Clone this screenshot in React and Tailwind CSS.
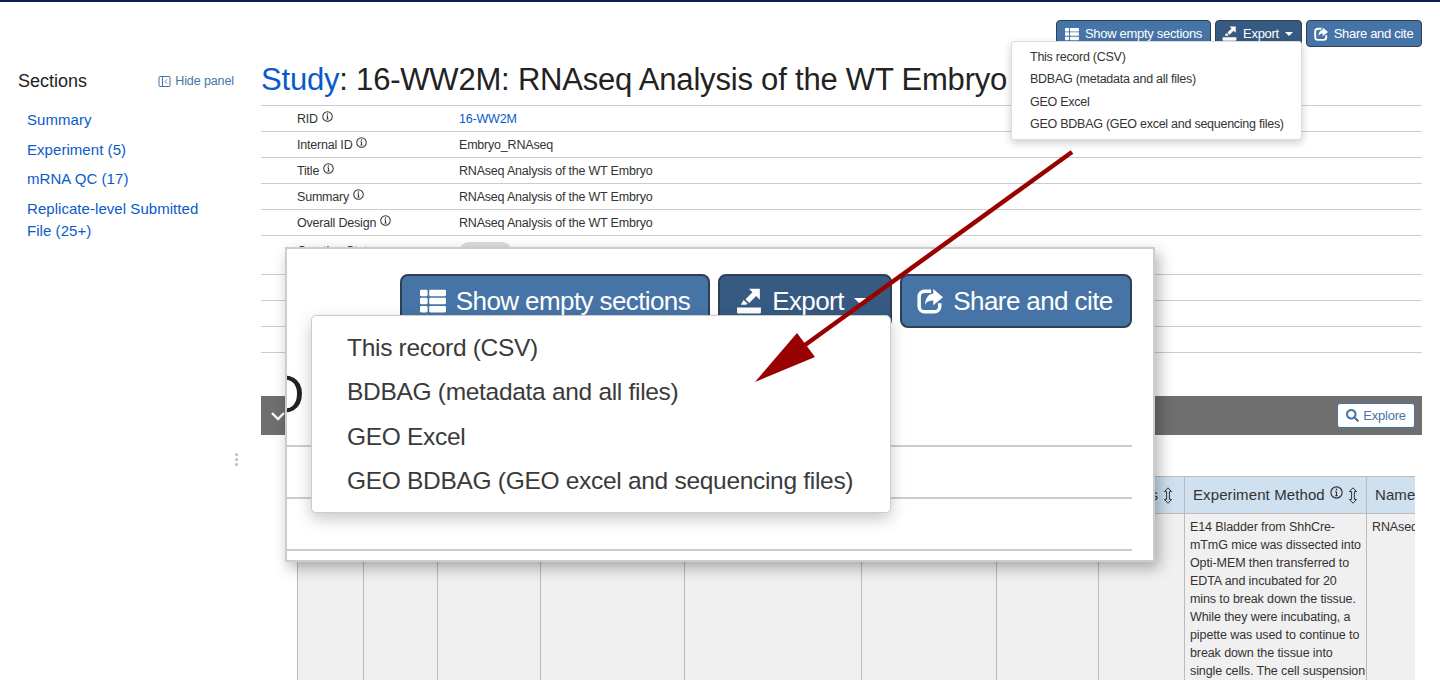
import { FaThList, FaSearch } from 'react-icons/fa';

const rows = [
  { label: 'RID', value: '16-WW2M', link: true },
  { label: 'Internal ID', value: 'Embryo_RNAseq' },
  { label: 'Title', value: 'RNAseq Analysis of the WT Embryo' },
  { label: 'Summary', value: 'RNAseq Analysis of the WT Embryo' },
  { label: 'Overall Design', value: 'RNAseq Analysis of the WT Embryo' },
];

const tableCols = [66, 74, 103, 144, 177, 135, 102, 86, 182, 56];

const exportItems = [
  'This record (CSV)',
  'BDBAG (metadata and all files)',
  'GEO Excel',
  'GEO BDBAG (GEO excel and sequencing files)',
];

const methodText = [
  'E14 Bladder from ShhCre-',
  'mTmG mice was dissected into',
  'Opti-MEM then transferred to',
  'EDTA and incubated for 20',
  'mins to break down the tissue.',
  'While they were incubating, a',
  'pipette was used to continue to',
  'break down the tissue into',
  'single cells. The cell suspension',
];

function InfoIcon({ size = 11 }) {
  return (
    <svg width={size} height={size} viewBox="0 0 12 12" fill="none" stroke="currentColor" className="inline-block shrink-0">
      <circle cx="6" cy="6" r="5.2" strokeWidth="1.1" />
      <path d="M6 5.2v3.6M4.9 8.8h2.2M4.9 5.2H6" strokeWidth="1.1" />
      <circle cx="6" cy="3.2" r="0.8" fill="currentColor" stroke="none" />
    </svg>
  );
}

function SortIcon() {
  return (
    <svg width="10" height="17" viewBox="0 0 10 17" fill="none" stroke="#333" strokeWidth="1" className="shrink-0">
      <path d="M5 .8 8.6 4.6H6.4v7.8h2.2L5 16.2 1.4 12.4h2.2V4.6H1.4z" />
    </svg>
  );
}

function ExportIcon({ size }) {
  return (
    <svg width={size} height={size} viewBox="0 0 24 24" fill="white">
      <path d="M1 18h22v4.5a1 1 0 0 1-1 1H2a1 1 0 0 1-1-1z" />
      <path d="M12 .8h10v10l-3.4-3.4-6.4 6.4-3.4-3.4 6.4-6.4z" />
      <path d="M4.5 15.5 7 11l3.5 3.3-1 1.2z" />
    </svg>
  );
}

function ShareIcon({ size }) {
  return (
    <svg width={size} height={size} viewBox="0 0 24 24" fill="none">
      <path d="M13 3H7a5 5 0 0 0-5 5v9a5 5 0 0 0 5 5h9a5 5 0 0 0 5-5v-3" stroke="white" strokeWidth="3.2" />
      <path d="M15 1l9 7.5-9 7.5v-4.5c-4 0-6 1-7.5 4 0-6 3-10 7.5-10.5z" fill="white" />
    </svg>
  );
}

function HidePanelIcon() {
  return (
    <svg width="13" height="13" viewBox="0 0 13 13" fill="none" stroke="#4674a7" strokeWidth="1" className="shrink-0">
      <rect x="1" y="1.5" width="11" height="10" rx="1" />
      <path d="M4.5 1.5v10" />
      <path d="M9 4.5 7 6.5l2 2" />
    </svg>
  );
}

function Btn({ className, children }) {
  return <div className={`flex items-center justify-center text-white ${className}`}>{children}</div>;
}

function ActionButtons() {
  const small = 'h-[27px] gap-[6px] rounded border border-[#2f3f54] text-[13px] tracking-[-0.3px]';
  return (
    <div className="flex justify-end gap-1 pr-[18px] pt-[18px]">
      <Btn className={`${small} w-[155px] bg-[#4674a7]`}>
        <FaThList size={14} />
        Show empty sections
      </Btn>
      <Btn className={`${small} w-[87px] bg-[#365a82] pr-[2px]`}>
        <ExportIcon size={15} />
        Export
        <span className="h-0 w-0 border-x-[4.5px] border-t-[4.5px] border-x-transparent border-t-white" />
      </Btn>
      <Btn className={`${small} w-[116px] bg-[#4674a7] pr-[1px]`}>
        <ShareIcon size={14} />
        Share and cite
      </Btn>
    </div>
  );
}

function Sidebar() {
  return (
    <aside className="relative w-[261px] shrink-0 pl-[18px] pr-[27px]">
      <div className="flex h-[50px] items-center justify-between pt-[18px]">
        <span className="text-[18px] text-[#222]">Sections</span>
        <span className="flex items-center gap-[4px] text-[12.5px] tracking-[-0.1px] text-[#4674a7]">
          <HidePanelIcon />
          Hide panel
        </span>
      </div>
      <nav className="flex flex-col gap-[7.5px] pl-[9px] pt-[12px] text-[15px] leading-[22px] tracking-[0.05px] text-[#0a5bc9]">
        <span>Summary</span>
        <span>Experiment (5)</span>
        <span>mRNA QC (17)</span>
        <span className="w-[190px]">Replicate-level Submitted File (25+)</span>
      </nav>
    </aside>
  );
}

function RecordTable() {
  return (
    <div className="border-t border-[#ccc] text-[12.5px] tracking-[-0.2px] text-[#333]">
      {rows.map((r) => (
        <div key={r.label} className="flex h-[26px] items-center border-b border-[#ccc] pl-9 pt-px">
          <div className="flex w-[162px] shrink-0 items-center gap-1">
            {r.label}
            <span className="mt-[-5px] flex"><InfoIcon /></span>
          </div>
          <span className={r.link ? 'text-[#0a5bc9]' : ''}>{r.value}</span>
        </div>
      ))}
      <div className="flex h-[39px] items-start border-b border-[#ccc] pl-9 pt-[6px]">
        <div className="w-[162px] shrink-0">Curation Status</div>
        <span className="h-5 w-[53px] rounded-full bg-[#ddd]" />
      </div>
      <div className="h-[26px] border-b border-[#ccc]" />
      <div className="h-[26px] border-b border-[#ccc]" />
      <div className="h-[26px] border-b border-[#ccc]" />
    </div>
  );
}

function ExperimentSection() {
  return (
    <section className="mt-[43px]">
      <div className="flex h-[39px] items-center justify-between bg-[#6f6f6f] pl-[8px] pr-[7px]">
        <svg width="18" height="18" viewBox="0 0 18 18" fill="none" stroke="white" strokeWidth="2.4">
          <path d="M3 6l6 6 6-6" />
        </svg>
        <div className="flex h-[25px] w-[78px] items-center justify-center gap-1 rounded-[3px] border border-[#4674a7] bg-white text-[13px] tracking-[-0.2px] text-[#4674a7]">
          <FaSearch size={13} />
          Explore
        </div>
      </div>
      <div className="ml-9 mr-[7px] mt-[41px] overflow-hidden">
        <div className="flex h-[38px] w-[1125px] border-y border-[#bbb] bg-[#cfe0f0] text-[15px] tracking-[0.1px] text-[#333]">
          {tableCols.map((w, i) => (
            <div key={i} style={{ width: w }} className="flex shrink-0 items-center gap-[5px] overflow-hidden border-l border-[#bbb] pl-2">
              {i === 7 && <span className="ml-auto">s</span>}
              {i === 7 && <SortIcon />}
              {i === 7 && <span className="w-[6px]" />}
              {i === 8 && <span className="whitespace-nowrap">Experiment Method</span>}
              {i === 8 && <span className="mt-[-5px] flex"><InfoIcon size={13} /></span>}
              {i === 8 && <SortIcon />}
              {i === 9 && <span>Name</span>}
            </div>
          ))}
        </div>
        <div className="flex h-[170px] w-[1125px] bg-[#f0f0f0] text-[12.5px] leading-[18px] tracking-[-0.1px] text-[#333]">
          {tableCols.map((w, i) => (
            <div key={i} style={{ width: w }} className="shrink-0 overflow-hidden border-l border-[#bbb] px-[5px] pt-[4px]">
              {i === 8 && methodText.map((t) => <div key={t} className="whitespace-nowrap">{t}</div>)}
              {i === 9 && 'RNAseq'}
            </div>
          ))}
        </div>
      </div>
    </section>
  );
}

function ZoomCallout() {
  const big = 'h-[54px] gap-[10px] rounded-lg border-2 border-[#2f3f54] text-[26px] tracking-[-0.6px]';
  return (
    <div className="absolute left-[285px] top-[247px] h-[315px] w-[870px] overflow-hidden border-2 border-[#ccc] bg-white shadow-[4px_6px_14px_rgba(0,0,0,0.3)]">
      <div className="flex justify-end gap-2 pr-[21px] pt-[25px]">
        <Btn className={`${big} w-[310px] bg-[#4674a7]`}>
          <FaThList size={26} />
          Show empty sections
        </Btn>
        <Btn className={`${big} w-[174px] bg-[#365a82] pr-[6px]`}>
          <ExportIcon size={26} />
          Export
          <span className="h-0 w-0 border-x-[7px] border-t-[7px] border-x-transparent border-t-white" />
        </Btn>
        <Btn className={`${big} w-[232px] bg-[#4674a7] pr-[2px]`}>
          <ShareIcon size={26} />
          Share and cite
        </Btn>
      </div>
      <span className="absolute left-[-23px] top-[115px] text-[52px] leading-[60px] text-[#222]">O</span>
      <div className="absolute left-0 top-[196px] w-[845px] border-t-2 border-[#ccc]" />
      <div className="absolute left-0 top-[248px] w-[845px] border-t-2 border-[#ccc]" />
      <div className="absolute left-0 top-[300px] w-[845px] border-t-2 border-[#ccc]" />
    </div>
  );
}

export default function App() {
  return (
    <div className="relative h-[680px] overflow-hidden bg-white font-['Liberation_Sans',Arial,sans-serif]">
      <div className="h-[2px] bg-[#0c1f4f]" />
      <ActionButtons />
      <div className="flex">
        <Sidebar />
        <main className="mr-[18px] min-w-0 flex-1 pt-[11px]">
          <h1 className="h-[47px] whitespace-nowrap text-[31px] leading-[44px] tracking-[-0.2px] text-[#222]">
            <span className="text-[#0a5bc9]">Study</span>: 16-WW2M: RNAseq Analysis of the WT Embryo
          </h1>
          <RecordTable />
          <ExperimentSection />
        </main>
      </div>

      <div className="absolute left-[235px] top-[453px] flex flex-col gap-[2px]">
        <span className="h-[3px] w-[3px] rounded-full bg-[#bbb]" />
        <span className="h-[3px] w-[3px] rounded-full bg-[#bbb]" />
        <span className="h-[3px] w-[3px] rounded-full bg-[#bbb]" />
      </div>

      <div className="absolute left-[1011px] top-[41px] flex h-[99px] w-[291px] flex-col justify-between rounded-[3px] border border-[#ddd] bg-white py-[4px] pl-[18px] text-[12.5px] tracking-[-0.26px] text-[#333] shadow-[0_3px_8px_rgba(0,0,0,0.2)]">
        {exportItems.map((t) => <div key={t} className="leading-[22px]">{t}</div>)}
      </div>

      <ZoomCallout />

      <div className="absolute left-[311px] top-[315px] flex h-[198px] w-[580px] flex-col justify-between rounded-[5px] border border-[#ccc] bg-white pb-[9px] pl-[35px] pt-[10px] text-[24.5px] tracking-[-0.3px] text-[#3a3a3a] shadow-[0_6px_16px_rgba(0,0,0,0.22)]">
        {exportItems.map((t) => <div key={t} className="leading-[44px]">{t}</div>)}
      </div>

      <svg className="pointer-events-none absolute left-0 top-0" width="1440" height="680">
        <path d="M1072 152 805 345" stroke="#990000" strokeWidth="4.5" fill="none" />
        <path d="M755 382 797 333 815 357z" fill="#990000" />
      </svg>
    </div>
  );
}
